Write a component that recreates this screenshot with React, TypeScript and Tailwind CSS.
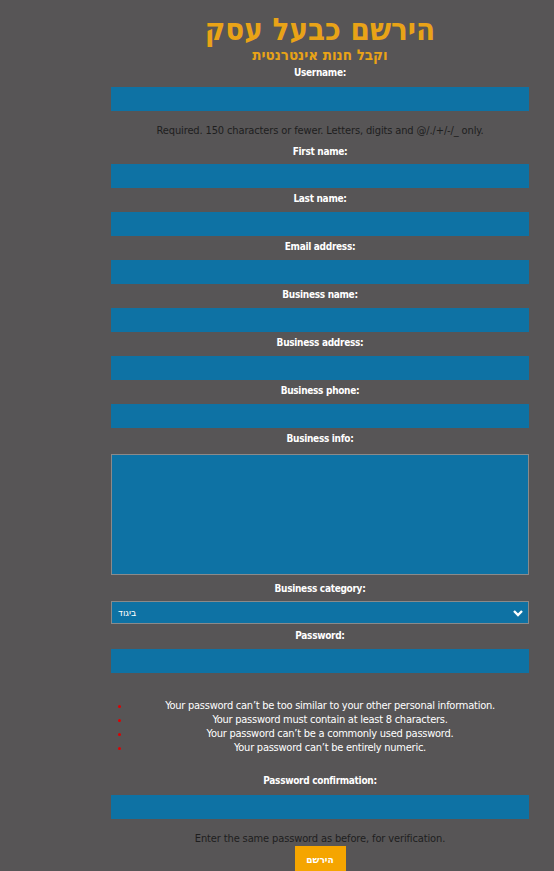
import React from "react";

const font = { fontFamily: "Tahoma, 'DejaVu Sans Condensed', 'DejaVu Sans', sans-serif" };

function Label({ children, className = "" }: { children: React.ReactNode; className?: string }) {
  return (
    <div className={"h-[14px] text-center text-[10px] font-bold leading-[14px] tracking-[-0.3px] text-white " + className}>
      {children}
    </div>
  );
}

function Input({ className = "" }: { className?: string }) {
  return <div className={"h-[24px] w-full bg-[#0e72a4] " + className} />;
}

export default function App() {
  return (
    <div className="min-h-[871px] w-full bg-[#575556]" style={font}>
      <div className="ml-[111px] w-[418px] pt-[13px]">
        <h1 dir="rtl" className="h-[33px] text-center text-[31px] font-bold leading-[33px] text-[#e9a317]">
          הירשם כבעל עסק
        </h1>
        <h2 dir="rtl" className="mt-[1px] h-[16px] text-center text-[15px] font-bold leading-[16px] text-[#e9a317]">
          וקבל חנות אינטרנטית
        </h2>
        <Label className="mt-[3px]">Username:</Label>
        <Input className="mt-[7px] h-[23px]" />
        <div className="mt-[13px] h-[14px] text-center text-[11px] leading-[14px] tracking-[-0.13px] text-[#1e1e1e]">
          Required. 150 characters or fewer. Letters, digits and @/./+/-/_ only.
        </div>
        <Label className="mt-[7px]">First name:</Label>
        <Input className="mt-[5px]" />
        <Label className="mt-[4px]">Last name:</Label>
        <Input className="mt-[6px]" />
        <Label className="mt-[4px]">Email address:</Label>
        <Input className="mt-[6px]" />
        <Label className="mt-[4px]">Business name:</Label>
        <Input className="mt-[6px]" />
        <Label className="mt-[4px]">Business address:</Label>
        <Input className="mt-[6px]" />
        <Label className="mt-[4px]">Business phone:</Label>
        <Input className="mt-[6px]" />
        <Label className="mt-[4px]">Business info:</Label>
        <div className="mt-[8px] h-[121px] w-full border border-[#8a8a8a] bg-[#0e72a4]" />
        <Label className="mt-[7px]">Business category:</Label>
        <div className="mt-[5px] flex h-[23px] w-full items-center justify-between border border-[#8a8a8a] bg-[#0e72a4] pl-[6px] pr-[4px]">
          <span dir="rtl" className="text-[10px] leading-[12px] text-white">ביגוד</span>
          <svg width="12" height="10" viewBox="0 0 12 10">
            <path d="M2 3 L6 7 L10 3" stroke="white" strokeWidth="2.4" fill="none" />
          </svg>
        </div>
        <Label className="mt-[5px]">Password:</Label>
        <Input className="mt-[6px]" />
        <ul className="mt-[26px] list-disc pl-[20px] text-[11px] leading-[14px] tracking-[-0.25px] text-white marker:text-[#e00000]">
          <li className="h-[14px] text-center">Your password can’t be too similar to your other personal information.</li>
          <li className="h-[14px] text-center">Your password must contain at least 8 characters.</li>
          <li className="h-[14px] text-center">Your password can’t be a commonly used password.</li>
          <li className="h-[14px] text-center">Your password can’t be entirely numeric.</li>
        </ul>
        <Label className="mt-[19px]">Password confirmation:</Label>
        <Input className="mt-[7px] h-[23px]" />
        <div className="mt-[13px] h-[14px] text-center text-[11px] leading-[14px] tracking-[-0.13px] text-[#1e1e1e]">
          Enter the same password as before, for verification.
        </div>
        <div className="flex justify-center">
          <button dir="rtl" className="h-[26px] w-[51px] bg-[#f5a500] text-[10px] font-bold text-white">
            הירשם
          </button>
        </div>
      </div>
    </div>
  );
}
